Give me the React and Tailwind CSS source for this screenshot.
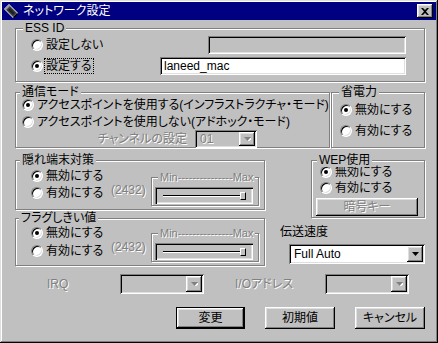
import React from "react";

const raised =
  "shadow-[inset_-1px_-1px_#000,inset_1px_1px_#fff,inset_-2px_-2px_#808080,inset_2px_2px_#dfdfdf]";
const sunken =
  "shadow-[inset_1px_1px_#808080,inset_-1px_-1px_#fff,inset_2px_2px_#000,inset_-2px_-2px_#dfdfdf]";
const dim = "text-[#808080] [text-shadow:1px_1px_0_#fff]";

function Group({ title, titleClass, className, children }) {
  return (
    <div
      className={`relative border border-[#808080] shadow-[inset_1px_1px_#fff,1px_1px_#fff] ${className}`}
    >
      <span
        className={`absolute top-[-8px] bg-[#c0c0c0] px-[2px] leading-[14px] whitespace-nowrap ${titleClass}`}
      >
        {title}
      </span>
      {children}
    </div>
  );
}

function Radio({ checked, focus, label }) {
  return (
    <label className="flex items-center whitespace-nowrap">
      <span className="w-[12px] h-[12px] shrink-0 rounded-full bg-white border border-t-[#808080] border-l-[#808080] border-r-white border-b-white shadow-[inset_1px_1px_#000,inset_-1px_-1px_#dfdfdf] flex items-center justify-center">
        {checked && <span className="w-[4px] h-[4px] rounded-full bg-black" />}
      </span>
      <span
        className={`ml-[1px] px-[1px] leading-[14px] border ${
          focus ? "border-dotted border-black" : "border-transparent"
        }`}
      >
        {label}
      </span>
    </label>
  );
}

function Arrow({ disabled }) {
  return (
    <svg width="7" height="4" viewBox="0 0 7 4">
      {disabled && <path d="M1 1h7l-3.5 4z" fill="#fff" />}
      <path d="M0 0h7l-3.5 4z" fill={disabled ? "#808080" : "#000"} />
    </svg>
  );
}

function Combo({ value, disabled, className }) {
  return (
    <div
      className={`flex items-stretch p-[2px] ${sunken} ${
        disabled ? "bg-[#c0c0c0]" : "bg-white"
      } ${className}`}
    >
      <span
        className={`flex-1 pl-[3px] flex items-center leading-[14px] ${
          disabled ? dim : "text-black"
        }`}
      >
        {value}
      </span>
      <span className={`w-[16px] bg-[#c0c0c0] ${raised} flex items-center justify-center`}>
        <Arrow disabled={disabled} />
      </span>
    </div>
  );
}

function Field({ value, disabled, className }) {
  return (
    <div
      className={`flex items-center pl-[4px] ${sunken} ${
        disabled ? "bg-[#c0c0c0]" : "bg-white"
      } ${className}`}
    >
      <span className="leading-[14px]">{value}</span>
    </div>
  );
}

function Button({ children, isDefault, disabled, className }) {
  const inner = (
    <div
      className={`h-full w-full flex items-center justify-center bg-[#c0c0c0] ${raised} ${
        disabled ? dim : "text-black"
      }`}
    >
      <span className="leading-[14px]">{children}</span>
    </div>
  );
  if (isDefault) {
    return <div className={`border border-black ${className}`}>{inner}</div>;
  }
  return <div className={className}>{inner}</div>;
}

function Slider({ className }) {
  return (
    <div
      className={`relative w-[108px] h-[29px] border border-[#808080] shadow-[inset_1px_1px_#fff,1px_1px_#fff] ${className}`}
    >
      <span
        className={`absolute top-[-8px] left-[6px] bg-[#c0c0c0] px-[2px] text-[11px] leading-[14px] whitespace-nowrap ${dim}`}
      >
        Min---------------Max
      </span>
      <div className="ml-[3px] mt-[9px] w-[98px] h-[17px] flex items-center pl-[8px] pr-[7px] bg-[#c0c0c0] shadow-[inset_1px_1px_#808080,inset_2px_2px_#000,inset_-1px_-1px_#fff,inset_-2px_-2px_#dfdfdf]">
        <div className="flex-1 h-[2px] border-t border-black border-b border-b-white" />
        <div className="w-[6px] h-[8px] bg-[#c0c0c0] border border-t-white border-l-white border-r-black border-b-black" />
      </div>
    </div>
  );
}

function CardIcon() {
  return (
    <svg width="16" height="16" viewBox="0 0 16 16">
      <path d="M1 6 L6 1 L15 10 L10 15 Z" fill="#fff" />
      <path d="M2 6 L6 2 L14 10 L10 14 Z" fill="#404040" />
      <path d="M2 6 L6 2 L7 3 L3 7 Z" fill="#a0a0a0" />
      <path d="M5 7 L7 5 L12 10 L10 12 Z" fill="#202020" />
      <path d="M10 14 L14 10 L15 11 L11 15 Z" fill="#000" />
    </svg>
  );
}

export default function App() {
  return (
    <div
      className={`w-[438px] h-[343px] bg-[#c0c0c0] p-[2px] text-[12px] text-black font-['Liberation_Sans','Noto_Sans_CJK_JP',sans-serif] [font-feature-settings:'palt'] shadow-[inset_-1px_-1px_#000,inset_1px_1px_#dfdfdf,inset_-2px_-2px_#808080,inset_2px_2px_#fff] flex flex-col`}
    >
      {/* title bar */}
      <div className="h-[18px] bg-[#000080] flex items-center pl-[1px] pr-[3px]">
        <CardIcon />
        <span className="ml-[4px] text-white leading-[14px]">ネットワーク設定</span>
        <div className={`ml-auto w-[16px] h-[14px] bg-[#c0c0c0] ${raised} flex items-center justify-center`}>
          <svg width="8" height="7" viewBox="0 0 8 7">
            <path d="M0 0h2l2 2 2-2h2L5 3.5 8 7H6L4 5 2 7H0l3-3.5z" fill="#000" />
          </svg>
        </div>
      </div>

      <div className="flex flex-col pl-[13px] pr-[11px]">
        {/* ESS ID */}
        <Group
          title="ESS ID"
          titleClass="left-[7px]"
          className="mt-[8px] h-[54px] pt-[7px] pl-[15px] pr-[18px] flex flex-col gap-[3px]"
        >
          <div className="flex h-[18px] items-center justify-between">
            <Radio label="設定しない" />
            <Field disabled className="w-[198px] h-[18px]" />
          </div>
          <div className="flex h-[18px] items-center justify-between">
            <Radio checked focus label="設定する" />
            <Field value="laneed_mac" className="w-[246px] h-[18px]" />
          </div>
        </Group>

        {/* mode + power */}
        <div className="flex justify-between mt-[10px]">
          <Group
            title="通信モード"
            titleClass="left-[4px]"
            className="w-[315px] h-[56px] pt-[3px] pl-[6px]"
          >
            <div className="h-[17px] flex items-center">
              <Radio checked label="アクセスポイントを使用する(インフラストラクチャ・モード)" />
            </div>
            <div className="h-[17px] flex items-center">
              <Radio label="アクセスポイントを使用しない(アドホック・モード)" />
            </div>
            <div className="h-[18px] flex items-center">
              <span className={`w-[173px] pr-[8px] text-right leading-[14px] ${dim}`}>
                チャンネルの設定
              </span>
              <Combo disabled value="01" className="w-[62px] h-[18px]" />
            </div>
          </Group>
          <Group
            title="省電力"
            titleClass="left-[7px]"
            className="w-[94px] h-[56px] pt-[6px] pl-[8px]"
          >
            <div className="h-[21px] flex items-center">
              <Radio checked label="無効にする" />
            </div>
            <div className="h-[21px] flex items-center">
              <Radio label="有効にする" />
            </div>
          </Group>
        </div>

        {/* middle rows */}
        <div className="flex mt-[12px]">
          <div className="w-[250px] flex flex-col">
            <Group
              title="隠れ端末対策"
              titleClass="left-[4px]"
              className="h-[50px] pt-[6px] pl-[15px] flex"
            >
              <div className="w-[80px] flex flex-col">
                <div className="h-[17px] flex items-center">
                  <Radio checked label="無効にする" />
                </div>
                <div className="h-[17px] flex items-center">
                  <Radio label="有効にする" />
                </div>
              </div>
              <span className={`w-[40px] mt-[16px] h-[14px] leading-[14px] ${dim}`}>(2432)</span>
              <Slider className="mt-[10px] self-start" />
            </Group>
            <Group
              title="フラグしきい値"
              titleClass="left-[3px]"
              className="h-[48px] mt-[8px] pt-[5px] pl-[15px] flex"
            >
              <div className="w-[80px] flex flex-col">
                <div className="h-[18px] flex items-center">
                  <Radio checked label="無効にする" />
                </div>
                <div className="h-[18px] flex items-center">
                  <Radio label="有効にする" />
                </div>
              </div>
              <span className={`w-[40px] mt-[16px] h-[14px] leading-[14px] ${dim}`}>(2432)</span>
              <Slider className="mt-[9px] self-start" />
            </Group>
          </div>
          <div className="flex-1 flex flex-col items-end">
            <Group
              title="WEP使用"
              titleClass="left-[5px]"
              className="w-[114px] h-[58px] pt-[3px] pl-[4px]"
            >
              <div className="h-[16px] flex items-center ml-[4px]">
                <Radio checked label="無効にする" />
              </div>
              <div className="h-[16px] flex items-center ml-[4px]">
                <Radio label="有効にする" />
              </div>
              <Button disabled className="mt-[2px] w-[102px] h-[18px]">
                暗号キー
              </Button>
            </Group>
            <span className="self-start ml-[15px] mt-[7px] leading-[14px]">伝送速度</span>
            <Combo value="Full Auto" className="w-[136px] h-[20px] mt-[5px]" />
          </div>
        </div>

        {/* IRQ / IO */}
        <div className="flex items-center mt-[8px] h-[20px]">
          <span className={`ml-[32px] w-[73px] leading-[14px] ${dim}`}>IRQ</span>
          <Combo disabled className="w-[84px] h-[20px]" />
          <span className={`ml-[31px] w-[90px] leading-[14px] ${dim}`}>I/Oアドレス</span>
          <Combo disabled className="w-[84px] h-[20px]" />
        </div>

        {/* buttons */}
        <div className="flex justify-end gap-[20px] mt-[13px]">
          <Button isDefault className="w-[69px] h-[22px]">
            変更
          </Button>
          <Button className="w-[70px] h-[22px]">初期値</Button>
          <Button className="w-[70px] h-[22px]">キャンセル</Button>
        </div>
      </div>
    </div>
  );
}
